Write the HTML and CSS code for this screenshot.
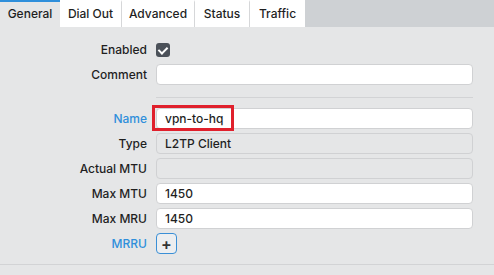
FILE: index.html
```html
<!DOCTYPE html>
<html lang="en">
<head>
    <meta charset="UTF-8">
    <title>Interface</title>
    <link rel="stylesheet" href="styles.css">
</head>
<body>
    <div class="tabs">
        <div class="tab active">General</div>
        <div class="tab">Dial Out</div>
        <div class="tab">Advanced</div>
        <div class="tab">Status</div>
        <div class="tab">Traffic</div>
    </div>

    <div class="panel">
        <div class="form">
            <label class="lbl">Enabled</label>
            <div class="field"><span class="check"></span></div>

            <label class="lbl">Comment</label>
            <div class="field"><div class="input"></div></div>

            <div class="sep"></div>

            <label class="lbl link">Name</label>
            <div class="field mark-wrap">
                <div class="input">vpn-to-hq</div>
                <!-- highlight box -->
                <div class="mark"></div>
            </div>

            <label class="lbl">Type</label>
            <div class="field"><div class="input ro">L2TP Client</div></div>

            <label class="lbl">Actual MTU</label>
            <div class="field"><div class="input ro"></div></div>

            <label class="lbl">Max MTU</label>
            <div class="field"><div class="input">1450</div></div>

            <label class="lbl">Max MRU</label>
            <div class="field"><div class="input">1450</div></div>

            <label class="lbl link">MRRU</label>
            <div class="field"><span class="add">+</span></div>
        </div>
    </div>
</body>
</html>
```

FILE: styles.css
```css
body {
    margin: 0;
    font-family: 'Inter', 'Liberation Sans', sans-serif;
    font-size: 12px;
    font-weight: 500;
    color: #1f1f1f;
    background: #e5e6e7;
    height: 275px;
    overflow: hidden;
}

/* tab strip */
.tabs {
    display: flex;
    height: 27px;
    background: #ced1d4;
}

.tab {
    width: 55px;
    box-sizing: border-box;
    display: flex;
    align-items: center;
    justify-content: center;
    background: #fff;
    border-right: 1px solid #d6d7d9;
    border-top: 2px solid transparent;
    padding-bottom: 2px;
    font-size: 12px;
}

.tab:nth-child(1) { width: 60px; }
.tab:nth-child(2) { width: 62px; }
.tab:nth-child(3) { width: 73px; }
.tab:nth-child(4) { width: 55px; }
.tab:nth-child(5) { width: 55px; border-right: none; }

.tab.active {
    background: #e5e6e7;
    border-top-color: #2f8fdb;
    border-right: none;
}

/* form */
.panel {
    height: 237px;
    border-bottom: 1px solid #d2d3d5;
}

.form {
    display: grid;
    grid-template-columns: 147px 317px;
    column-gap: 9px;
    row-gap: 4px;
    padding-top: 12px;
}

.lbl {
    display: flex;
    align-items: center;
    justify-content: flex-end;
    height: 21px;
}

.lbl.link {
    color: #2f8fdb;
}

.field {
    display: flex;
    align-items: center;
    height: 21px;
}

.input {
    box-sizing: border-box;
    width: 100%;
    height: 21px;
    background: #fff;
    border: 1px solid #d0d1d3;
    border-radius: 4px;
    padding: 0 8px;
    display: flex;
    align-items: center;
}

.input.ro {
    background: #e5e6e7;
}

.sep {
    grid-column: 2;
    height: 1px;
    background: #d2d3d5;
    margin: 8px 0 6px;
}

.check {
    width: 14px;
    height: 14px;
    border-radius: 3px;
    background: #4b5159;
    position: relative;
}

.check::after {
    content: '';
    position: absolute;
    left: 4px;
    top: 2px;
    width: 4px;
    height: 7px;
    border: solid #fff;
    border-width: 0 2px 2px 0;
    transform: rotate(45deg);
}

.add {
    box-sizing: border-box;
    width: 21px;
    height: 21px;
    border: 1px solid #3a8fd6;
    border-radius: 4px;
    background: #eceef0;
    display: flex;
    align-items: center;
    justify-content: center;
    font-size: 16px;
    font-weight: 600;
    color: #333;
}

.mark-wrap {
    position: relative;
}

.mark {
    position: absolute;
    left: -4px;
    top: -3px;
    width: 82px;
    height: 26px;
    box-sizing: border-box;
    border: 3px solid #e0202c;
}
```
